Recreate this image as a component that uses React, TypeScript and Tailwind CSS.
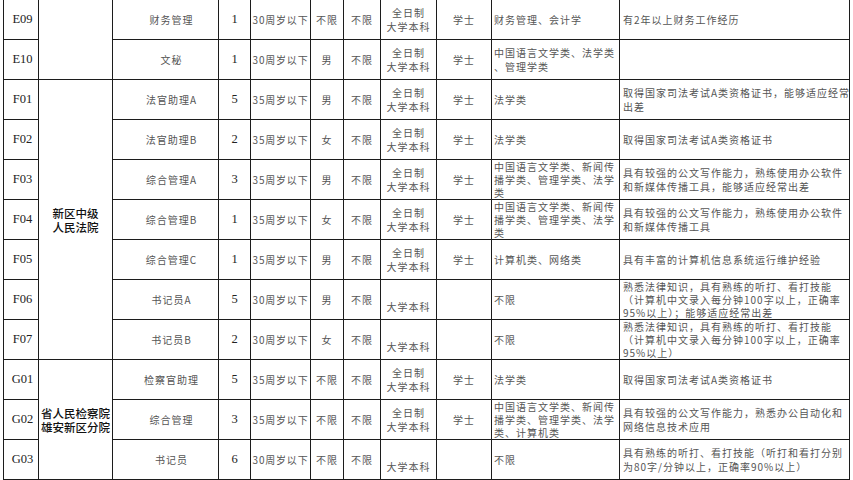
type Row = {
  code: string;
  unit?: { lines: string[]; span: number } | 'cont';
  post: string;
  count: string;
  age: string;
  gender: string;
  politics: string;
  edu: string[];
  degree: string;
  major: string[];
  qual: string[];
};

const ft = '[font-family:"Noto_Sans_CJK_SC","Noto_Sans",sans-serif]';
void ft;

const fullEdu = ['全日制', '大学本科'];
const lowEdu = ['\u00a0', '大学本科'];
const majorZh = ['中国语言文学类、新闻传', '播学类、管理学类、法学', '类'];
const clerkQual = ['熟悉法律知识，具有熟练的听打、看打技能', '（计算机中文录入每分钟100字以上，正确率'];

const rows: Row[] = [
  {
    code: 'E09',
    unit: { lines: [], span: 2 },
    post: '财务管理',
    count: '1',
    age: '30周岁以下',
    gender: '不限',
    politics: '不限',
    edu: fullEdu,
    degree: '学士',
    major: ['财务管理、会计学'],
    qual: ['有2年以上财务工作经历'],
  },
  {
    code: 'E10',
    unit: 'cont',
    post: '文秘',
    count: '1',
    age: '30周岁以下',
    gender: '男',
    politics: '不限',
    edu: fullEdu,
    degree: '学士',
    major: ['中国语言文学类、法学类', '、管理学类'],
    qual: [],
  },
  {
    code: 'F01',
    unit: { lines: ['新区中级', '人民法院'], span: 7 },
    post: '法官助理A',
    count: '5',
    age: '35周岁以下',
    gender: '男',
    politics: '不限',
    edu: fullEdu,
    degree: '学士',
    major: ['法学类'],
    qual: ['取得国家司法考试A类资格证书，能够适应经常', '出差'],
  },
  {
    code: 'F02',
    unit: 'cont',
    post: '法官助理B',
    count: '2',
    age: '35周岁以下',
    gender: '女',
    politics: '不限',
    edu: fullEdu,
    degree: '学士',
    major: ['法学类'],
    qual: ['取得国家司法考试A类资格证书'],
  },
  {
    code: 'F03',
    unit: 'cont',
    post: '综合管理A',
    count: '3',
    age: '35周岁以下',
    gender: '男',
    politics: '不限',
    edu: fullEdu,
    degree: '学士',
    major: majorZh,
    qual: ['具有较强的公文写作能力，熟练使用办公软件', '和新媒体传播工具，能够适应经常出差'],
  },
  {
    code: 'F04',
    unit: 'cont',
    post: '综合管理B',
    count: '1',
    age: '35周岁以下',
    gender: '女',
    politics: '不限',
    edu: fullEdu,
    degree: '学士',
    major: majorZh,
    qual: ['具有较强的公文写作能力，熟练使用办公软件', '和新媒体传播工具'],
  },
  {
    code: 'F05',
    unit: 'cont',
    post: '综合管理C',
    count: '1',
    age: '35周岁以下',
    gender: '男',
    politics: '不限',
    edu: fullEdu,
    degree: '学士',
    major: ['计算机类、网络类'],
    qual: ['具有丰富的计算机信息系统运行维护经验'],
  },
  {
    code: 'F06',
    unit: 'cont',
    post: '书记员A',
    count: '5',
    age: '30周岁以下',
    gender: '男',
    politics: '不限',
    edu: lowEdu,
    degree: '',
    major: ['不限'],
    qual: [...clerkQual, '95%以上）；能够适应经常出差'],
  },
  {
    code: 'F07',
    unit: 'cont',
    post: '书记员B',
    count: '2',
    age: '30周岁以下',
    gender: '女',
    politics: '不限',
    edu: lowEdu,
    degree: '',
    major: ['不限'],
    qual: [...clerkQual, '95%以上）'],
  },
  {
    code: 'G01',
    unit: { lines: ['省人民检察院', '雄安新区分院'], span: 3 },
    post: '检察官助理',
    count: '5',
    age: '35周岁以下',
    gender: '不限',
    politics: '不限',
    edu: fullEdu,
    degree: '学士',
    major: ['法学类'],
    qual: ['取得国家司法考试A类资格证书'],
  },
  {
    code: 'G02',
    unit: 'cont',
    post: '综合管理',
    count: '3',
    age: '35周岁以下',
    gender: '不限',
    politics: '不限',
    edu: fullEdu,
    degree: '学士',
    major: ['中国语言文学类、新闻传', '播学类、管理学类、法学', '类、计算机类'],
    qual: ['具有较强的公文写作能力，熟悉办公自动化和', '网络信息技术应用'],
  },
  {
    code: 'G03',
    unit: 'cont',
    post: '书记员',
    count: '6',
    age: '30周岁以下',
    gender: '不限',
    politics: '不限',
    edu: lowEdu,
    degree: '',
    major: ['不限'],
    qual: ['具有熟练的听打、看打技能（听打和看打分别', '为80字/分钟以上，正确率90%以上）'],
  },
];

const cell = 'border border-[#1c1c1c] p-0 h-[40px] align-middle overflow-hidden';
const zh = 'font-["Noto_Sans_CJK_SC",sans-serif] text-[10px] tracking-[1px] text-[#555]';
const serif = 'font-["Liberation_Serif",serif] text-[12.5px] text-[#222]';

const Lines = ({ lines, tight }: { lines: string[]; tight?: boolean }) => (
  <div className={tight ? 'leading-[13px]' : 'leading-[14px]'}>
    {lines.map((line, i) => (
      <div key={i} className="whitespace-nowrap overflow-hidden">
        {line}
      </div>
    ))}
  </div>
);

export default function App() {
  return (
    <div className="w-[853px] h-[480px] overflow-hidden bg-white">
      <table className="table-fixed border-collapse ml-[3px] -mt-px w-[846px]">
        <colgroup>
          <col className="w-[35px]" />
          <col className="w-[74px]" />
          <col className="w-[106px]" />
          <col className="w-[32px]" />
          <col className="w-[60px]" />
          <col className="w-[33px]" />
          <col className="w-[37px]" />
          <col className="w-[56px]" />
          <col className="w-[55px]" />
          <col className="w-[128px]" />
          <col className="w-[230px]" />
        </colgroup>
        <tbody>
          {rows.map((r) => (
            <tr key={r.code}>
              <td className={`${cell} ${serif} text-center pl-[3px]`}>{r.code}</td>
              {r.unit && r.unit !== 'cont' && (
                <td
                  rowSpan={r.unit.span}
                  className={`${cell} text-center font-["Noto_Sans_CJK_SC",sans-serif] text-[11.5px] font-medium text-[#111] leading-[14px]`}
                >
                  {r.unit.lines.map((l) => (
                    <div key={l} className="whitespace-nowrap">
                      {l}
                    </div>
                  ))}
                </td>
              )}
              <td className={`${cell} ${zh} text-center pl-[12px]`}>{r.post}</td>
              <td className={`${cell} ${serif} text-center`}>{r.count}</td>
              <td className={`${cell} font-["Noto_Sans_CJK_SC",sans-serif] text-[10px] tracking-[0.8px] text-[#555] text-center whitespace-nowrap`}>
                {r.age}
              </td>
              <td className={`${cell} ${zh} text-center`}>{r.gender}</td>
              <td className={`${cell} ${zh} text-center`}>{r.politics}</td>
              <td className={`${cell} ${zh} text-center`}>
                <Lines lines={r.edu} />
              </td>
              <td className={`${cell} ${zh} text-center`}>{r.degree}</td>
              <td className={`${cell} ${zh} text-left pl-[2px]`}>
                <Lines lines={r.major} tight={r.major.length > 2} />
              </td>
              <td className={`${cell} ${zh} text-left pl-[3px]`}>
                <Lines lines={r.qual} tight={r.qual.length > 2} />
              </td>
            </tr>
          ))}
        </tbody>
      </table>
    </div>
  );
}
